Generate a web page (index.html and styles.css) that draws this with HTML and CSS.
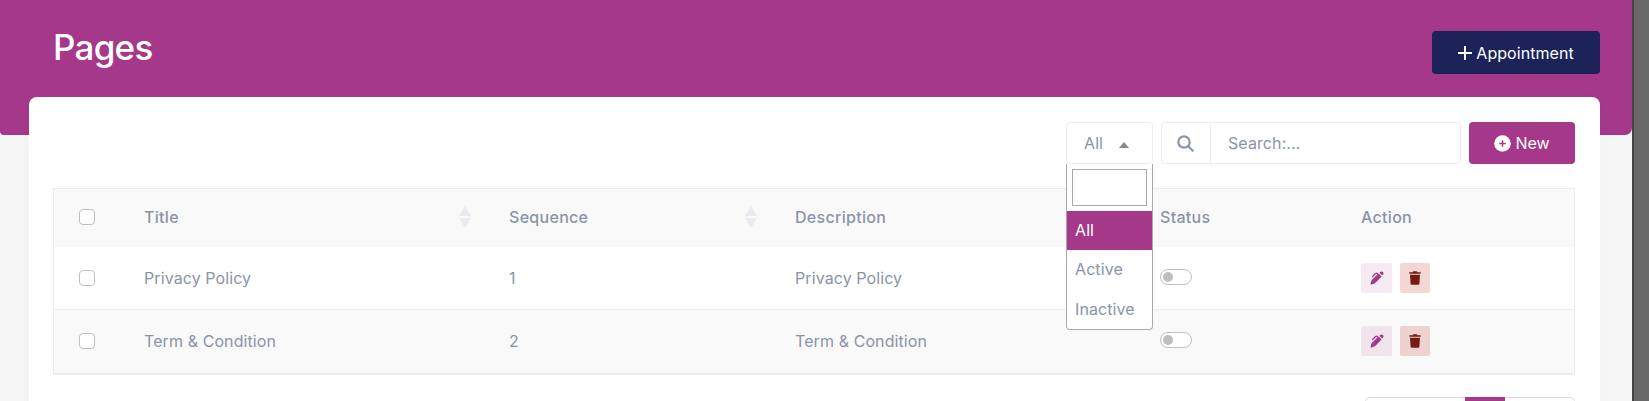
FILE: index.html
```html
<!DOCTYPE html>
<html lang="en">
<head>
<meta charset="utf-8">
<title>Pages</title>
<link rel="stylesheet" href="styles.css">
</head>
<body>
<svg class="defs" aria-hidden="true">
  <symbol id="pen" viewBox="0 0 14 14"><path d="M8.600 2.600l3 3-5.600 5.700c-1.200 1.100-2.800 1.900-5.500 2.300.3-2.700.9-4.200 2-5.300z"/><path d="M9.500 1.700l.7-.7c1-.9 2-.7 2.700 0s.9 1.700 0 2.700l-.7.7z"/><path d="M2.600 5.500l3-3q.8-.7 1.600 0l.5.500" fill="none" stroke="currentColor" stroke-width="1.200" stroke-linecap="round"/></symbol>
  <symbol id="trash" viewBox="0 0 12 14"><path d="M.3 1.200h3.400L4.300.2h3.400l.6 1h3.400v1.500H.3zM1 3.700h10l-.6 9q-.1 1.100-1.200 1.100H2.800q-1.100 0-1.200-1.100z"/></symbol>
  <symbol id="sort" viewBox="0 0 12 22"><path d="M6 0l6 10H0zM6 22L0 12h12z"/></symbol>
</svg>
<div class="window">
  <main class="page">
    <header class="hero">
      <h1 class="hero-title">Pages</h1>
      <button class="btn btn-navy"><svg width="14" height="14" viewBox="0 0 14 14"><path d="M7 .8v12.400M.8 7h12.400" stroke="currentColor" stroke-width="2" stroke-linecap="round"/></svg>Appointment</button>
    </header>
    <section class="card">
      <div class="toolbar">
        <div class="select">
          <div class="select-box"><span>All</span><i class="caret"></i></div>
          <div class="select-menu">
            <input class="select-filter" type="text" aria-label="Filter">
            <div class="option selected">All</div>
            <div class="option">Active</div>
            <div class="option">Inactive</div>
          </div>
        </div>
        <div class="search">
          <span class="search-icon"><svg width="17" height="17" viewBox="0 0 17 17" fill="none" stroke="currentColor" stroke-width="2.200" stroke-linecap="round"><circle cx="7" cy="7" r="5.700"/><path d="M11.200 11.200l4.600 4.500"/></svg></span>
          <span class="search-text">Search:...</span>
        </div>
        <button class="btn btn-new"><svg width="17" height="17" viewBox="0 0 17 17"><circle cx="8.500" cy="8.500" r="8.300" fill="currentColor"/><path class="plus" d="M8.500 5.300v6.400M5.300 8.500h6.400"/></svg>New</button>
      </div>
      <div class="table">
        <div class="row head">
          <span class="check"></span>
          <span class="cell sortable">Title<svg class="sort"><use href="#sort"/></svg></span>
          <span class="cell sortable">Sequence<svg class="sort"><use href="#sort"/></svg></span>
          <span class="cell">Description</span>
          <span class="cell">Status</span>
          <span class="cell">Action</span>
        </div>
        <div class="row">
          <span class="check"></span>
          <span class="cell">Privacy Policy</span>
          <span class="cell">1</span>
          <span class="cell">Privacy Policy</span>
          <span class="toggle"></span>
          <span class="actions"><a class="act edit"><svg width="14" height="14"><use href="#pen"/></svg></a><a class="act remove"><svg width="12" height="14"><use href="#trash"/></svg></a></span>
        </div>
        <div class="row striped">
          <span class="check"></span>
          <span class="cell">Term &amp; Condition</span>
          <span class="cell">2</span>
          <span class="cell">Term &amp; Condition</span>
          <span class="toggle"></span>
          <span class="actions"><a class="act edit"><svg width="14" height="14"><use href="#pen"/></svg></a><a class="act remove"><svg width="12" height="14"><use href="#trash"/></svg></a></span>
        </div>
      </div>
      <div class="pagination"><span class="current"></span></div>
    </section>
  </main>
  <div class="gutter"></div>
</div>
</body>
</html>
```
FILE: styles.css
```css
* { box-sizing: border-box; }
body { margin: 0; overflow: hidden; font: 16px/24px Inter, sans-serif; letter-spacing: .09px; color: #8a94a8; }
.defs { position: absolute; width: 0; height: 0; }
.window { display: flex; height: 401px; overflow: hidden; }
.page { width: 1632px; background: #f6f6f6; }
.gutter { flex: 1; background: #686868; border-left: 2px solid #444; }
.hero { height: 135px; padding: 31px 32px 0 53px; display: flex; justify-content: space-between; align-items: flex-start; background: #a53889; border-radius: 0 0 7px 4px; }
.hero-title { margin: -5px 0 0; font-size: 35px; line-height: 42px; font-weight: 500; letter-spacing: -.75px; color: #fff; }
.btn { display: flex; align-items: center; justify-content: center; gap: 4px; border: 0; border-radius: 4px; font: 16px/24px Inter, sans-serif; color: #fff; padding: 0; }
.btn-navy { width: 168px; height: 43px; letter-spacing: .05px; background: #1b2359; }
.btn-new { width: 106px; height: 42px; background: #a53889; }
.plus { stroke: #a53889; stroke-width: 1.5; }
.card { margin: -38px 32px 0 29px; height: 320px; padding: 25px 25px 0 24px; background: #fff; border-radius: 8px; box-shadow: 0 0 20px rgba(0,0,0,.015); position: relative; }
.toolbar { display: flex; justify-content: flex-end; gap: 8px; height: 42px; margin-bottom: 24px; }
.select { position: relative; width: 87px; }
.select-box { display: flex; align-items: center; justify-content: space-between; height: 42px; padding: 0 23px 0 17px; border: 1px solid #ededf0; border-radius: 4px; }
.caret { border: 5px solid transparent; border-top: 0; border-bottom: 6px solid #888; margin-top: 3px; }
.select-menu { position: absolute; top: 42px; left: 0; width: 87px; height: 166px; padding-top: 5px; background: #fff; border: 1px solid #aaa; border-top: 0; border-radius: 0 0 4px 4px; }
.select-filter { display: block; width: 75px; height: 37px; margin: 0 5px 5px; border: 1px solid #aaa; }
.option { height: 39.5px; padding-left: 8px; line-height: 39px; }
.selected { background: #a53889; color: #fff; height: 39px; }
.search { display: flex; width: 300px; height: 42px; border: 1px solid #ededf0; border-radius: 4px; }
.search-icon { display: flex; align-items: center; justify-content: center; width: 49px; padding-right: 1px; border-right: 1px solid #ededf0; }
.search-text { padding-left: 17px; line-height: 40px; }
.table { border: 1px solid #ececec; border-bottom-width: 2px; }
.row { display: grid; grid-template-columns: 65px 365px 286px 365px 201px 1fr; align-items: center; height: 62px; padding-left: 25px; }
.head { height: 58px; background: #f9f9f9; font-weight: 500; letter-spacing: .3px; padding-bottom: 2px; }
.striped { height: 64px; padding-bottom: 1px; background: #f9f9f9; border-top: 1px solid #ececec; }
.sortable { display: flex; justify-content: space-between; align-items: center; padding-right: 38px; }
.sort { width: 12px; height: 22px; fill: #ebebef; }
.check { width: 16px; height: 16px; background: #fff; border: 1px solid #bfbfbf; border-radius: 4px; }
.toggle { width: 32px; height: 16px; margin-bottom: 2px; padding: 2px; border: 1px solid #bfbfbf; border-radius: 8px; background: #fff; }
.toggle::before { content: ""; display: block; width: 10px; height: 10px; border-radius: 50%; background: #bfbfbf; }
.actions { display: flex; gap: 8px; }
.act { display: flex; align-items: center; justify-content: center; width: 30px; height: 30px; border-radius: 2px; }
.act svg { fill: currentColor; }
.edit { width: 31px; color: #a53889; background: rgba(165,56,137,.1); }
.remove { color: #751b12; background: rgba(192,57,43,.2); }
.pagination { display: flex; width: 210px; height: 40px; margin: 22px 0 0 auto; border: 1px solid #ead0e4; border-radius: 5px; padding-left: 99px; }
.current { width: 40px; margin-top: -1px; background: #a53889; }
```
